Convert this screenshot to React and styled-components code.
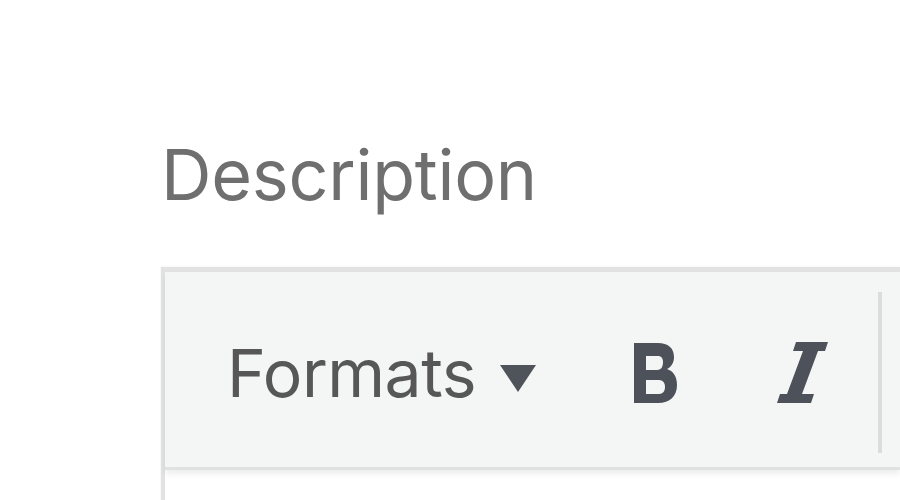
import styled, { createGlobalStyle } from "styled-components";

const GlobalStyle = createGlobalStyle`
  html, body {
    margin: 0;
    padding: 0;
    background: #ffffff;
    overflow: hidden;
  }
`;

const Page = styled.div`
  width: 900px;
  height: 500px;
  padding: 135px 0 0 161px;
  box-sizing: border-box;
  overflow: hidden;
  font-family: Inter, "Liberation Sans", sans-serif;
`;

const Label = styled.div`
  font-size: 70px;
  line-height: 80px;
  color: #6f6f6f;
  letter-spacing: -0.25px;
  margin-bottom: 52px;
`;

const Editor = styled.div`
  border: 4px solid #e2e2e2;
  border-top-width: 5px;
  border-right: none;
  box-shadow: 0 0 2px rgba(0, 0, 0, 0.08);
  background: #ffffff;
  height: 300px;
`;

const Toolbar = styled.div`
  display: flex;
  align-items: center;
  height: 189px;
  padding: 6px 0 0 62px;
  background: #f4f5f5;
  border-bottom: 3px solid #e0e1e1;
  box-shadow: 0 4px 6px rgba(0, 0, 0, 0.07);
`;

const MenuButton = styled.div`
  display: flex;
  align-items: center;
  font-size: 66px;
  color: #575757;
  letter-spacing: -0.5px;
  margin-right: 98px;
`;

const Caret = styled.span`
  display: inline-block;
  width: 0;
  height: 0;
  border-left: 18px solid transparent;
  border-right: 18px solid transparent;
  border-top: 27px solid #4f545b;
  margin-left: 24px;
  margin-top: 12px;
`;

const IconButton = styled.div`
  display: flex;
  align-items: center;
  margin-right: ${(p) => p.$gap || 0}px;
  svg {
    display: block;
    fill: #4d525a;
  }
`;

const Separator = styled.div`
  width: 4px;
  height: 161px;
  background: #dcdcdc;
`;

const BoldIcon = () => (
  <svg width="44" height="60" viewBox="0 0 44 60">
    <path
      fillRule="evenodd"
      d="M0 0H24C34 0 40 5 40 14C40 20 37 24 33 26C39 28 43 33 43 42C43 53 36 60 24 60H0Z
         M12 13H24C27 13 29 15 29 19C29 24 27 27 23 27H12Z
         M12 37H25C29 37 31 40 31 44C31 48 29 51 25 51H12Z"
    />
  </svg>
);

const ItalicIcon = () => (
  <svg width="52" height="61" viewBox="0 0 52 61">
    <path d="M19 0H51L48 9H41L25 52H37L34 61H0L3 52H10L26 9H16Z" />
  </svg>
);

const App = () => {
  return (
    <>
      <GlobalStyle />
      <Page>
        <Label>Description</Label>
        <Editor>
          <Toolbar>
            <MenuButton>
              Formats
              <Caret />
            </MenuButton>
            <IconButton $gap={99}>
              <BoldIcon />
            </IconButton>
            <IconButton $gap={49}>
              <ItalicIcon />
            </IconButton>
            <Separator />
          </Toolbar>
        </Editor>
      </Page>
    </>
  );
};

export default App;
